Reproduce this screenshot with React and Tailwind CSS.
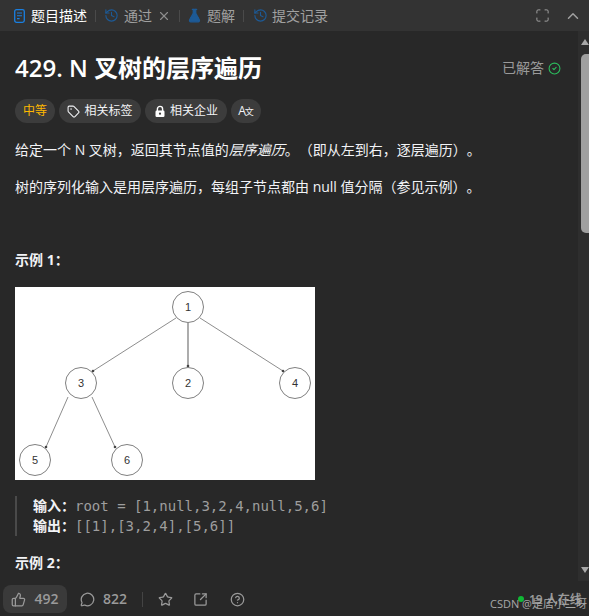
import React from "react";
import { History, X, FlaskConical, Maximize, ChevronUp, CircleCheck, Tag, ThumbsUp, MessageCircle, Star, SquareArrowOutUpRight, CircleHelp } from "lucide-react";

function Tree() {
  const n = [
    ["1", 173, 20], ["3", 66, 96], ["2", 173, 96], ["4", 280, 96], ["5", 20, 173], ["6", 112, 173],
  ];
  return (
    <svg width="300" height="193" viewBox="0 0 300 193" className="block">
      <rect width="300" height="193" fill="#fff" />
      <g stroke="#808080" strokeWidth="0.9" fill="none">
        <line x1="161" y1="31" x2="78" y2="84" />
        <line x1="173" y1="36" x2="173" y2="79" strokeWidth="1.3" />
        <line x1="185" y1="31" x2="268" y2="84" />
        <line x1="53" y1="110" x2="31" y2="160" />
        <line x1="77" y1="110" x2="100" y2="160" />
      </g>
      <g fill="#444">
        <circle cx="78" cy="84" r="1.3" /><circle cx="173" cy="79" r="1.3" /><circle cx="268" cy="84" r="1.3" />
        <circle cx="31" cy="160" r="1.3" /><circle cx="100" cy="160" r="1.3" />
      </g>
      {n.map(([t, x, y]) => (
        <g key={t}>
          <circle cx={x} cy={y} r="15.5" fill="none" stroke="#808080" strokeWidth="1" />
          <text x={x} y={y + 4} textAnchor="middle" fontSize="11" fill="#333" fontFamily="'Liberation Sans', sans-serif">{t}</text>
        </g>
      ))}
    </svg>
  );
}

function Pill({ children, className = "" }) {
  return <div className={`h-6 rounded-full bg-[#3c3c3c] flex items-center justify-center gap-1 text-xs ${className}`}>{children}</div>;
}

function Sep() {
  return <div className="w-px h-3 bg-[#4a4a4a]" />;
}

function DocIcon() {
  return (
    <svg width="11" height="14" viewBox="0 0 11 14" fill="none" stroke="#1a7fe0" strokeWidth="1.3">
      <rect x="0.7" y="0.7" width="9.6" height="12.6" rx="1.8" />
      <path d="M3 4h5M3 6.8h5M3 9.6h2.6" strokeWidth="1.1" />
    </svg>
  );
}

function LockIcon() {
  return (
    <svg width="12" height="13" viewBox="0 0 12 13">
      <path d="M3.4 6V4a2.6 2.6 0 0 1 5.2 0v2" fill="none" stroke="#fff" strokeWidth="1.4" />
      <rect x="1.5" y="5.5" width="9" height="6.5" rx="1.2" fill="#fff" />
      <circle cx="6" cy="8.7" r="1.1" fill="#3c3c3c" />
    </svg>
  );
}

export default function App() {
  return (
    <div className="w-[589px] h-[616px] bg-[#282828] flex flex-col overflow-hidden relative text-[#f2f3f6] [text-spacing-trim:space-all] font-['Open_Sans','Noto_Sans_CJK_SC',sans-serif]">
      <div className="h-[31px] shrink-0 bg-[#333333] flex items-center pl-[14px] pr-[7px] text-sm text-[#a0a0a0]">
        <DocIcon />
        <span className="ml-[6px] text-white">题目描述</span>
        <div className="ml-2 mr-2"><Sep /></div>
        <History size={15} className="text-[#1d5a96]" strokeWidth={1.8} />
        <span className="ml-[5px]">通过</span>
        <X size={14} className="ml-[5px] text-[#8c8c8c]" />
        <div className="ml-2 mr-[7px]"><Sep /></div>
        <FlaskConical size={15} className="text-[#1d5a96] fill-[#1d5a96]" />
        <span className="ml-[5px]">题解</span>
        <div className="ml-2 mr-[9px]"><Sep /></div>
        <History size={15} className="text-[#1d5a96]" strokeWidth={1.8} />
        <span className="ml-[4px]">提交记录</span>
        <Maximize size={15} className="ml-auto text-[#a0a0a0]" strokeWidth={1.6} />
        <ChevronUp size={18} className="ml-[14px] text-[#a0a0a0]" />
      </div>

      <div className="flex-1 min-h-0 overflow-hidden pl-[15px] pr-[20px]">
        <div className="flex items-center justify-between mt-[21px] h-[32px]">
          <div className="text-[24px] font-semibold text-white leading-8">429. N 叉树的层序遍历</div>
          <div className="flex items-center gap-1 text-sm text-[#9a9a9a] mr-[8px]">
            <span>已解答</span>
            <CircleCheck size={13} className="text-[#2cbb5d]" />
          </div>
        </div>
        <div className="flex gap-1 mt-[15px]">
          <Pill className="w-10 text-[#ffb800]">中等</Pill>
          <Pill className="w-[82px]"><Tag size={13} />相关标签</Pill>
          <Pill className="w-[82px]"><LockIcon />相关企业</Pill>
          <Pill className="w-[30px] !gap-0"><span>A</span><span className="text-[9px] -ml-px mt-px">文</span></Pill>
        </div>
        <p className="mt-[16px] text-sm leading-[22px]">给定一个 N 叉树，返回其节点值的<em>层序遍历</em>。（即从左到右，逐层遍历）。</p>
        <p className="mt-[15px] text-sm leading-[22px]">树的序列化输入是用层序遍历，每组子节点都由 null 值分隔（参见示例）。</p>
        <p className="mt-[51px] text-sm font-bold leading-[22px]">示例 1：</p>
        <div className="mt-[16px]"><Tree /></div>
        <div className="mt-[16px] border-l-2 border-[#4a4a4a] pl-[16px] text-sm leading-[20px] h-[40px]">
          <div className="flex"><b className="w-[42px]">输入：</b><span className="font-['DejaVu_Sans_Mono',monospace] text-[#9e9e9e]">root = [1,null,3,2,4,null,5,6]</span></div>
          <div className="flex"><b className="w-[42px]">输出：</b><span className="font-['DejaVu_Sans_Mono',monospace] text-[#9e9e9e]">[[1],[3,2,4],[5,6]]</span></div>
        </div>
        <p className="mt-[16px] text-sm font-bold leading-[22px]">示例 2：</p>
      </div>

      <div className="h-[32px] shrink-0 flex items-center pl-[3px] text-sm font-semibold text-[#9a9a9a] mb-px">
        <div className="w-16 h-7 rounded-lg bg-[#3a3a3a] flex items-center justify-center gap-2">
          <ThumbsUp size={15} /><span>492</span>
        </div>
        <MessageCircle size={15} className="ml-[13px]" />
        <span className="ml-[8px]">822</span>
        <div className="ml-[15px] w-px h-[15px] bg-[#444]" />
        <Star size={15} className="ml-[15px]" />
        <SquareArrowOutUpRight size={15} className="ml-[20px]" />
        <CircleHelp size={15} className="ml-[22px]" />
      </div>

      <div className="absolute right-0 top-[31px] bottom-[35px] w-[11px] bg-[#2e2e2e] overflow-hidden flex flex-col">
        <div className="mt-[8px] ml-[3px] w-0 h-0 border-x-4 border-x-transparent border-b-[6px] border-b-[#a8a8a8]" />
        <div className="mt-[9px] ml-[3px] w-[12px] h-[179px] shrink-0 rounded-[5px] bg-[#a0a0a0]" />
        <div className="mt-auto mb-[8px] ml-[3px] w-0 h-0 border-x-4 border-x-transparent border-t-[6px] border-t-[#a8a8a8]" />
      </div>

      <div className="absolute left-[518px] top-[596px] w-[6px] h-[6px] rounded-full bg-[#10b835]" />
      <div className="absolute left-[529px] top-[592px] text-xs font-semibold text-[#9a9a9a] whitespace-nowrap">19 人在线</div>
      <div className="absolute left-[490px] top-[597px] text-[11px] leading-[14px] text-[#a8a8a8] whitespace-nowrap">CSDN @是店小二呀</div>
    </div>
  );
}
